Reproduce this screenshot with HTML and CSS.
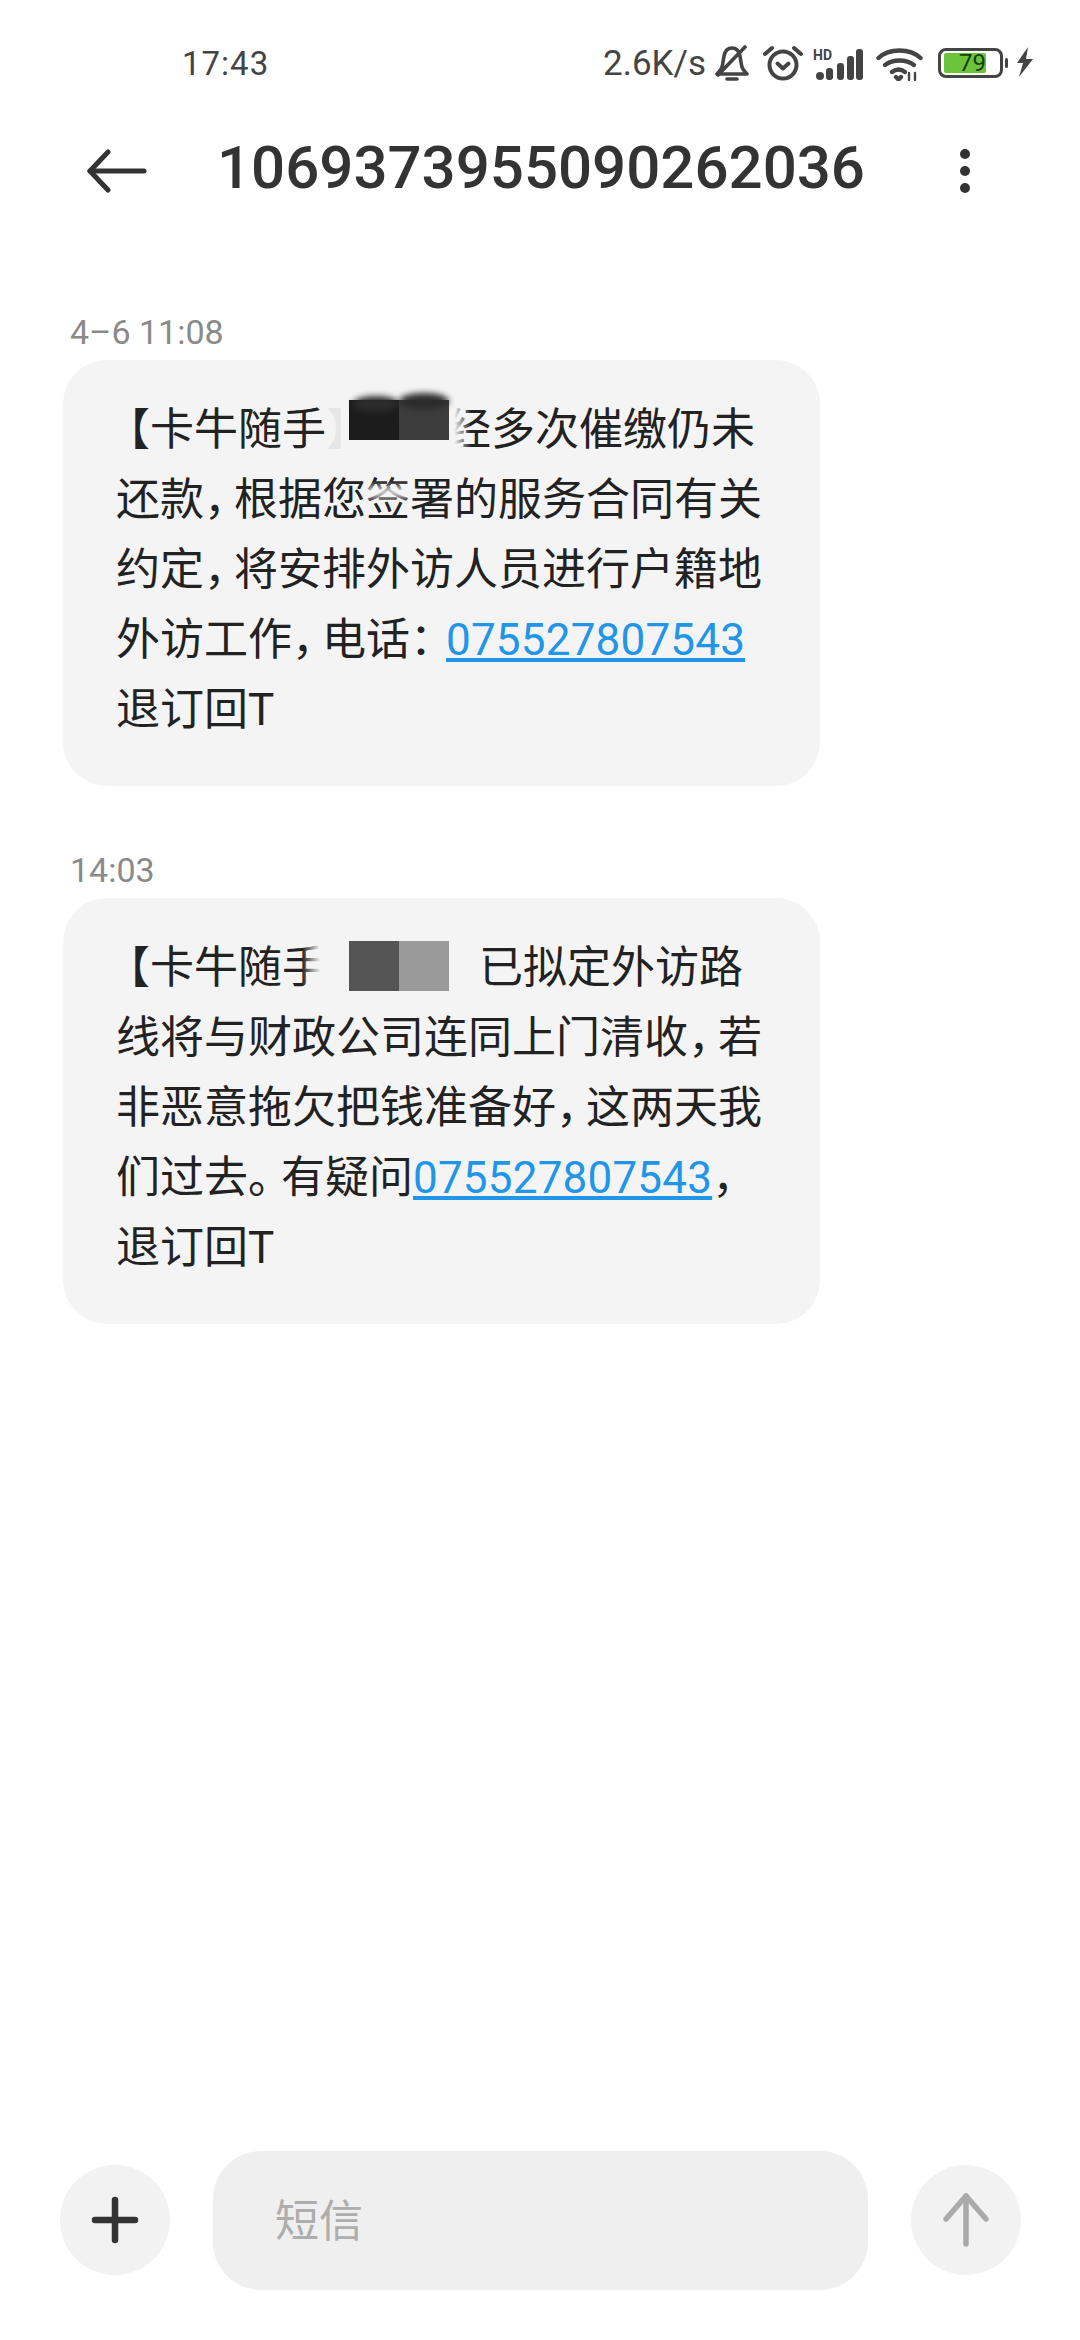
FILE: index.html
```html
<!DOCTYPE html>
<html lang="zh">
<head>
  <meta charset="UTF-8" />
  <title>短信</title>
  <meta name="viewport" content="width=device-width, initial-scale=1" />
  <link rel="stylesheet" href="styles.css">
</head>
<body>
  <div class="phone">

    <div class="status-bar">
      <span class="clock">17:43</span>
      <div class="status-right">
        <span class="speed">2.6K/s</span>
        <svg class="ico-bell" width="34" height="36" viewBox="0 0 34 36" fill="none" stroke="#444" stroke-width="3.600" stroke-linecap="round" stroke-linejoin="round">
          <path d="M2 29h30c-3-3-5-5-5.500-9l-1.500-9C24 6 21 3 17 3S10 6 9 11l-1.500 9C7 24 5 26 2 29z"/>
          <path d="M3 30L30 2"/>
          <path d="M12 34h10"/>
        </svg>
        <svg class="ico-alarm" width="40" height="37" viewBox="0 0 40 37" fill="none" stroke="#444" stroke-width="4" stroke-linecap="round" stroke-linejoin="round">
          <circle cx="20" cy="21" r="13.500"/>
          <path d="M14.500 19.500l5.500 5 5.500-5"/>
          <path d="M2 10l7-6"/>
          <path d="M38 10l-7-6"/>
        </svg>
        <svg class="ico-signal" width="50" height="33" viewBox="0 0 50 33" fill="#444">
          <text x="0" y="12" class="hd">HD</text>
          <circle cx="7" cy="28" r="4"/>
          <rect x="13" y="20" width="7" height="12" rx="3"/>
          <rect x="24" y="15" width="7" height="17" rx="3"/>
          <rect x="34" y="8" width="7" height="24" rx="3"/>
          <rect x="43" y="1" width="7" height="31" rx="3"/>
        </svg>
        <svg class="ico-wifi" width="47" height="34" viewBox="0 0 47 34" fill="none" stroke="#444" stroke-width="4.400" stroke-linecap="round">
          <path d="M2.500 11C13 1 34 1 44.500 11"/>
          <path d="M9 18c8-6 21-6 29 0"/>
          <path d="M16 25c4-3 9-3 13 0"/>
          <path d="M20 30l2.500 2.500L25 30" fill="#444"/>
          <path d="M33 26v7M39 26v7" stroke-width="2.400"/>
        </svg>
        <div class="battery">
          <div class="battery-body"><div class="battery-level">79</div></div>
          <div class="battery-nub"></div>
        </div>
        <svg class="ico-bolt" width="18" height="30" viewBox="0 0 18 30" fill="#444">
          <path d="M12 0L1 16h6L3 30l14-18h-7z"/>
        </svg>
      </div>
    </div>

    <div class="top-bar">
      <svg class="back" width="60" height="44" viewBox="0 0 60 44" fill="none" stroke="#333" stroke-width="5" stroke-linecap="round" stroke-linejoin="round">
        <path d="M57 22H3"/>
        <path d="M21 3L3 22l18 19"/>
      </svg>
      <h1 class="title">1069373955090262036</h1>
      <div class="dots"><i></i><i></i><i></i></div>
    </div>

    <div class="thread">
      <div class="msg">
        <div class="msg-time">4–6 11:08</div>
        <div class="bubble">
          <span class="open">【</span>卡牛随手<span class="ghost">】</span><span class="mask mask-dark"><b></b><b></b></span><span class="fade-left">经</span>多次催缴仍未<br>
          还款<span class="comma">，</span>根据您<span class="smear">签</span>署的服务合同有关<br>
          约定<span class="comma">，</span>将安排外访人员进行户籍地<br>
          外访工作<span class="comma">，</span>电话<span class="colon">：</span><a href="#">075527807543</a><br>
          退订回T
        </div>
      </div>
      <div class="msg">
        <div class="msg-time">14:03</div>
        <div class="bubble">
          <span class="open">【</span>卡牛随<span class="fade-right">手</span><span class="mask mask-gray"><b></b><b></b></span>已拟定外访路<br>
          线将与财政公司连同上门清收<span class="comma">，</span>若<br>
          非恶意拖欠把钱准备好<span class="comma">，</span>这两天我<br>
          们过去<span class="stop">。</span>有疑问<a href="#">075527807543</a><span class="comma">，</span><br>
          退订回T
        </div>
      </div>
    </div>

    <div class="composer">
      <div class="round-btn">
        <svg width="48" height="48" viewBox="0 0 48 48" fill="none" stroke="#333" stroke-width="6.500" stroke-linecap="round">
          <path d="M24 4v40"/>
          <path d="M4 24h40"/>
        </svg>
      </div>
      <div class="sms-input">短信</div>
      <div class="round-btn">
        <svg width="48" height="54" viewBox="0 0 48 54" fill="none" stroke="#aaa" stroke-width="5.500" stroke-linecap="round" stroke-linejoin="round">
          <path d="M24 3v48"/>
          <path d="M4 26L24 3l20 23"/>
        </svg>
      </div>
    </div>

  </div>
</body>
</html>
```

FILE: styles.css
```css
* {
  box-sizing: border-box;
}
html, body {
  margin: 0;
  padding: 0;
  background: #fff;
}
.phone {
  width: 1080px;
  height: 2340px;
  display: flex;
  flex-direction: column;
  font-family: Roboto, "Noto Sans CJK SC", sans-serif;
  color: #222;
  overflow: hidden;
}

/* status bar */
.status-bar {
  height: 126px;
  padding: 44px 46px 0 182px;
  display: flex;
  justify-content: space-between;
  align-items: flex-start;
  color: #444;
}
.clock {
  font-size: 33px;
  line-height: 40px;
  letter-spacing: 1px;
}
.status-right {
  display: flex;
  align-items: flex-start;
}
.speed {
  font-size: 35px;
  line-height: 40px;
  width: 112px;
}
.ico-bell {
  margin-top: 1px;
}
.ico-alarm {
  margin: 0 0 0 14px;
}
.ico-signal {
  margin: 4px 0 0 10px;
}
.hd {
  font-size: 14px;
  font-weight: 700;
}
.ico-wifi {
  margin: 3px 0 0 13px;
}
.battery {
  margin: 4px 0 0 15px;
  display: flex;
  align-items: center;
}
.battery-body {
  width: 65px;
  height: 30px;
  border: 3px solid #444;
  border-radius: 8px;
  padding: 2px 3px;
}
.battery-level {
  width: 42px;
  height: 20px;
  background: #6cc43a;
  border-radius: 2px;
  color: #17400c;
  font-size: 24px;
  line-height: 20px;
  text-align: right;
}
.battery-nub {
  width: 3px;
  height: 10px;
  margin-left: 2px;
  background: #444;
  border-radius: 2px;
}
.ico-bolt {
  margin: 3px 0 0 8px;
}

/* title row */
.top-bar {
  height: 90px;
  padding: 0 0 0 87px;
  display: flex;
  align-items: center;
}
.title {
  margin: 0 0 8px 70px;
  width: 650px;
  font-size: 60px;
  font-weight: 500;
  color: #333;
  white-space: nowrap;
}
.dots {
  margin-left: 93px;
  display: flex;
  flex-direction: column;
  gap: 7px;
}
.dots i {
  display: block;
  width: 10px;
  height: 10px;
  border-radius: 50%;
  background: #333;
}

/* messages */
.thread {
  flex: 1;
  padding: 96px 0 0 63px;
  display: flex;
  flex-direction: column;
  gap: 64px;
}
.msg-time {
  margin: 0 0 8px 7px;
  font-size: 34px;
  line-height: 40px;
  color: #8a8a8a;
}
.bubble {
  width: 757px;
  height: 426px;
  padding: 35px 20px 0 53px;
  background: #f4f4f4;
  border-radius: 44px;
  font-size: 44px;
  line-height: 70px;
  white-space: nowrap;
}
.bubble a {
  color: #2196e8;
  letter-spacing: 0.2px;
}

/* the CJK punctuation of the reference font is narrower */
.comma {
  letter-spacing: -14px;
}
.stop {
  letter-spacing: -11px;
}
.colon {
  letter-spacing: -8px;
}
.open {
  margin-left: -10px;
}
.ghost {
  color: #e6e6e6;
  letter-spacing: -22px;
}

/* redacted blocks and their smudged edges */
.mask {
  display: inline-flex;
  vertical-align: top;
  width: 100px;
  position: relative;
  z-index: 1;
}
.mask b {
  display: block;
  width: 50px;
  position: relative;
}
.mask-dark {
  margin-top: 5px;
  height: 40px;
  margin-left: 1px;
  margin-right: -2px;
}
.mask-dark b:first-child {
  background: #1c1c1c;
}
.mask-dark b:last-child {
  background: #3c3c3c;
}
.mask-dark b::before {
  content: "";
  position: absolute;
  left: 4px;
  right: 0;
  top: -4px;
  height: 16px;
  border-radius: 50%;
  background: #2c2c2c;
  filter: blur(3px);
}
.mask-dark b:last-child::before {
  top: -7px;
  left: 0;
}
.mask-gray {
  margin-top: 8px;
  height: 50px;
  margin-left: 23px;
  margin-right: 30px;
}
.mask-gray b:first-child {
  background: #555;
}
.mask-gray b:last-child {
  background: #9a9a9a;
}
.fade-left, .fade-right, .smear {
  position: relative;
}
.fade-left::after {
  content: "";
  position: absolute;
  left: 0;
  top: 0;
  width: 24px;
  height: 100%;
  background: linear-gradient(to right, #f4f4f4 30%, rgba(244, 244, 244, 0));
}
.fade-right::after {
  content: "";
  position: absolute;
  right: -2px;
  top: 0;
  width: 26px;
  height: 100%;
  background: linear-gradient(to right, rgba(244, 244, 244, 0), #f4f4f4 70%);
}
.smear::after {
  content: "";
  position: absolute;
  left: 0;
  right: 0;
  top: 12px;
  height: 12px;
  background: #f4f4f4;
  opacity: 0.8;
  filter: blur(3px);
}

/* bottom input */
.composer {
  height: 190px;
  padding: 0 59px 50px 60px;
  display: flex;
  justify-content: space-between;
  align-items: center;
}
.round-btn {
  width: 110px;
  height: 110px;
  border-radius: 50%;
  background: #f2f2f2;
  display: flex;
  align-items: center;
  justify-content: center;
}
.sms-input {
  width: 655px;
  height: 139px;
  padding-left: 62px;
  border-radius: 48px;
  background: #efefef;
  color: #adadad;
  font-size: 44px;
  line-height: 142px;
}
```
